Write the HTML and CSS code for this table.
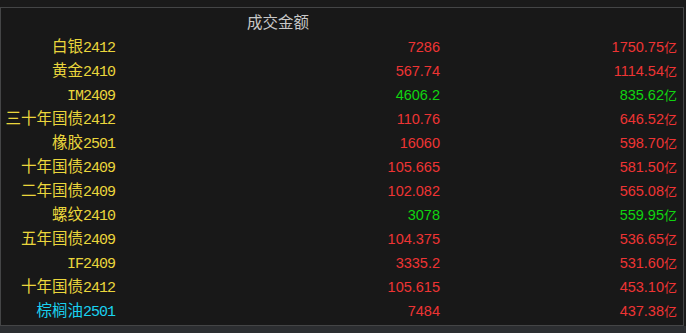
FILE: index.html
```html
<!DOCTYPE html>
<html lang="zh">
<head>
<meta charset="utf-8">
<link rel="stylesheet" href="styles.css">
</head>
<body>
<div class="top"></div>
<div class="panel">
  <div class="head"><span class="h-name"></span><span class="h-amt">成交金额</span><span></span></div>
  <div class="row"><span class="name y">白银<span class="code">2412</span></span><span class="num r">7286</span><span class="num r">1750.75<span class="yi">亿</span></span></div>
  <div class="row"><span class="name y">黄金<span class="code">2410</span></span><span class="num r">567.74</span><span class="num r">1114.54<span class="yi">亿</span></span></div>
  <div class="row"><span class="name y"><span class="code">IM2409</span></span><span class="num g">4606.2</span><span class="num g">835.62<span class="yi">亿</span></span></div>
  <div class="row"><span class="name y">三十年国债<span class="code">2412</span></span><span class="num r">110.76</span><span class="num r">646.52<span class="yi">亿</span></span></div>
  <div class="row"><span class="name y">橡胶<span class="code">2501</span></span><span class="num r">16060</span><span class="num r">598.70<span class="yi">亿</span></span></div>
  <div class="row"><span class="name y">十年国债<span class="code">2409</span></span><span class="num r">105.665</span><span class="num r">581.50<span class="yi">亿</span></span></div>
  <div class="row"><span class="name y">二年国债<span class="code">2409</span></span><span class="num r">102.082</span><span class="num r">565.08<span class="yi">亿</span></span></div>
  <div class="row"><span class="name y">螺纹<span class="code">2410</span></span><span class="num g">3078</span><span class="num g">559.95<span class="yi">亿</span></span></div>
  <div class="row"><span class="name y">五年国债<span class="code">2409</span></span><span class="num r">104.375</span><span class="num r">536.65<span class="yi">亿</span></span></div>
  <div class="row"><span class="name y"><span class="code">IF2409</span></span><span class="num r">3335.2</span><span class="num r">531.60<span class="yi">亿</span></span></div>
  <div class="row"><span class="name y">十年国债<span class="code">2412</span></span><span class="num r">105.615</span><span class="num r">453.10<span class="yi">亿</span></span></div>
  <div class="row"><span class="name c">棕榈油<span class="code">2501</span></span><span class="num r">7484</span><span class="num r">437.38<span class="yi">亿</span></span></div>
</div>
<div class="foot"></div>
</body>
</html>
```
FILE: styles.css
```css
html, body {
  margin: 0;
  padding: 0;
  background: #1a1a1a;
  width: 686px;
  height: 333px;
  overflow: hidden;
}
.top {
  height: 7px;
  background: #1a1a1a;
}
.panel {
  width: 682px;
  height: 317px;
  border: 1px solid #444546;
  background: #181818;
  box-sizing: content-box;
}
.head, .row {
  display: grid;
  grid-template-columns: 114px 325px 237px;
  align-items: center;
}
.head {
  height: 25px;
}
.row {
  height: 24px;
}
.h-amt {
  grid-column: 2;
  padding-left: 132px;
  color: #c8c8c8;
  font-family: "Noto Sans CJK SC", sans-serif;
  font-size: 15.5px;
  line-height: 24px;
}
.name {
  text-align: right;
  font-family: "Noto Sans CJK SC", sans-serif;
  font-size: 15.5px;
  line-height: 24px;
  white-space: nowrap;
}
.code {
  font-family: "Liberation Mono", monospace;
  font-size: 15px;
  letter-spacing: -1px;
}
.num {
  text-align: right;
  font-family: "Liberation Sans", Arial, sans-serif;
  font-size: 14.5px;
  line-height: 24px;
}
.yi {
  font-family: "Noto Sans CJK SC", sans-serif;
  font-size: 13px;
}
.y { color: #ead63c; }
.c { color: #19d2f0; }
.r { color: #ee3434; }
.g { color: #10d410; }
.foot {
  height: 7px;
  background: #2c2e31;
}
```
